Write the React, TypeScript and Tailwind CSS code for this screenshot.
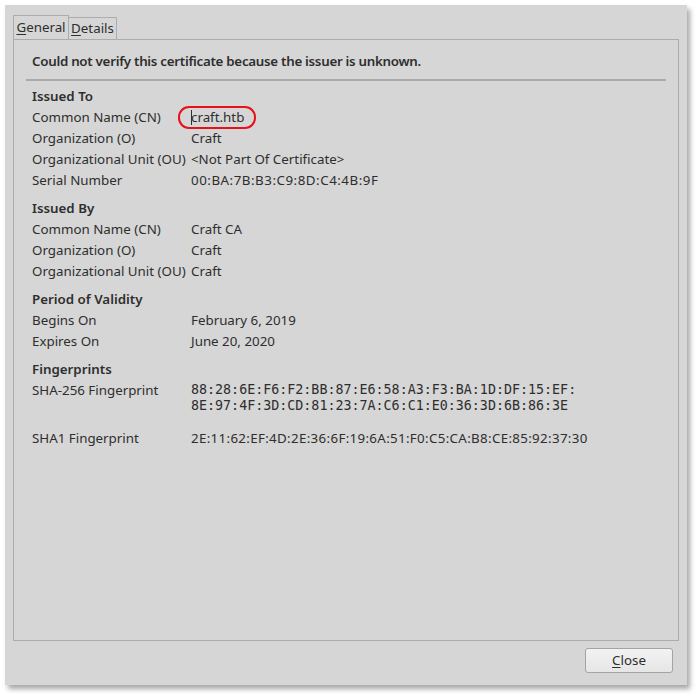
import React from "react";

type Row = { label: string; value: React.ReactNode; track?: string };

const sections: { title: string; rows: Row[] }[] = [
  {
    title: "Issued To",
    rows: [
      { label: "Common Name (CN)", value: "craft.htb" },
      { label: "Organization (O)", value: "Craft" },
      { label: "Organizational Unit (OU)", value: "<Not Part Of Certificate>" },
      { label: "Serial Number", value: "00:BA:7B:B3:C9:8D:C4:4B:9F", track: "tracking-[0.52px]" },
    ],
  },
  {
    title: "Issued By",
    rows: [
      { label: "Common Name (CN)", value: "Craft CA" },
      { label: "Organization (O)", value: "Craft" },
      { label: "Organizational Unit (OU)", value: "Craft" },
    ],
  },
  {
    title: "Period of Validity",
    rows: [
      { label: "Begins On", value: "February 6, 2019" },
      { label: "Expires On", value: "June 20, 2020" },
    ],
  },
];

const InfoRow = ({ label, value, track }: Row) => (
  <div className="flex h-[21px] leading-[21px]">
    <div className="w-[159px] shrink-0">{label}</div>
    <div className={track}>{value}</div>
  </div>
);

export default function App() {
  return (
    <div
      className="w-[696px] h-[694px] bg-white pt-[5px] pl-[5px] text-[13.33px] text-[#2e2e2e]"
      style={{ fontFamily: '"Noto Sans", "DejaVu Sans", sans-serif' }}
    >
      <div className="w-[682px] h-[680px] bg-[#d6d6d6] flex flex-col px-[8px] pt-[10px] shadow-[3px_4px_5px_rgba(0,0,0,0.35)]">
        {/* Tabs */}
        <div className="flex items-end h-[24px]">
          <div className="h-[24px] w-[56px] border border-b-0 border-[#acacac] flex items-center justify-center leading-none">
            <span>
              <span className="underline underline-offset-2">G</span>eneral
            </span>
          </div>
          <div className="h-[22px] w-[48px] border border-b-0 border-l-0 border-[#acacac] flex items-center justify-center leading-none">
            <span>
              <span className="underline underline-offset-2">D</span>etails
            </span>
          </div>
        </div>

        {/* Panel */}
        <div className="h-[602px] border border-[#acacac] px-[12px] pt-[11px]">
          <div className="px-[6px] h-[21px] leading-[21px] font-semibold tracking-[-0.28px]">
            Could not verify this certificate because the issuer is unknown.
          </div>
          <div className="mt-[7px] h-[2px] bg-[#a9a9a9]" />

          <div className="px-[6px] pt-[5px]">
            {sections.map((s) => (
              <div key={s.title} className="mb-[7px]">
                <div className="h-[21px] leading-[21px] font-semibold">{s.title}</div>
                {s.rows.map((r, i) =>
                  s.title === "Issued To" && i === 0 ? (
                    <div key={i} className="flex h-[21px] leading-[21px]">
                      <div className="w-[159px] shrink-0">{r.label}</div>
                      <div className="relative">
                        <span className="absolute left-[-13px] top-[-1px] w-[78px] h-[23px] rounded-[11px] border-2 border-[#e8101a]" />
                        <span className="absolute left-0 top-[3px] w-px h-[15px] bg-[#2e2e2e]" />
                        {r.value}
                      </div>
                    </div>
                  ) : (
                    <InfoRow key={i} {...r} />
                  )
                )}
              </div>
            ))}

            <div>
              <div className="h-[21px] leading-[21px] font-semibold">Fingerprints</div>
              <div className="flex">
                <div className="w-[159px] shrink-0 h-[21px] leading-[21px]">SHA-256 Fingerprint</div>
                <div
                  className="pt-[2px] leading-[16px]"
                  style={{ fontFamily: '"DejaVu Sans Mono", monospace' }}
                >
                  <div>88:28:6E:F6:F2:BB:87:E6:58:A3:F3:BA:1D:DF:15:EF:</div>
                  <div>8E:97:4F:3D:CD:81:23:7A:C6:C1:E0:36:3D:6B:86:3E</div>
                </div>
              </div>
              <div className="mt-[14px]">
                <InfoRow
                  label="SHA1 Fingerprint"
                  value="2E:11:62:EF:4D:2E:36:6F:19:6A:51:F0:C5:CA:B8:CE:85:92:37:30"
                  track="tracking-[0.33px]"
                />
              </div>
            </div>
          </div>
        </div>

        {/* Footer */}
        <div className="flex justify-end pt-[7px] pr-[6px]">
          <button className="w-[88px] h-[25px] rounded-[3px] border border-[#a4a4a4] bg-gradient-to-b from-[#f2f2f2] to-[#e6e6e6] text-[#2e2e2e] leading-none">
            <span className="underline underline-offset-2">C</span>lose
          </button>
        </div>
      </div>
    </div>
  );
}
